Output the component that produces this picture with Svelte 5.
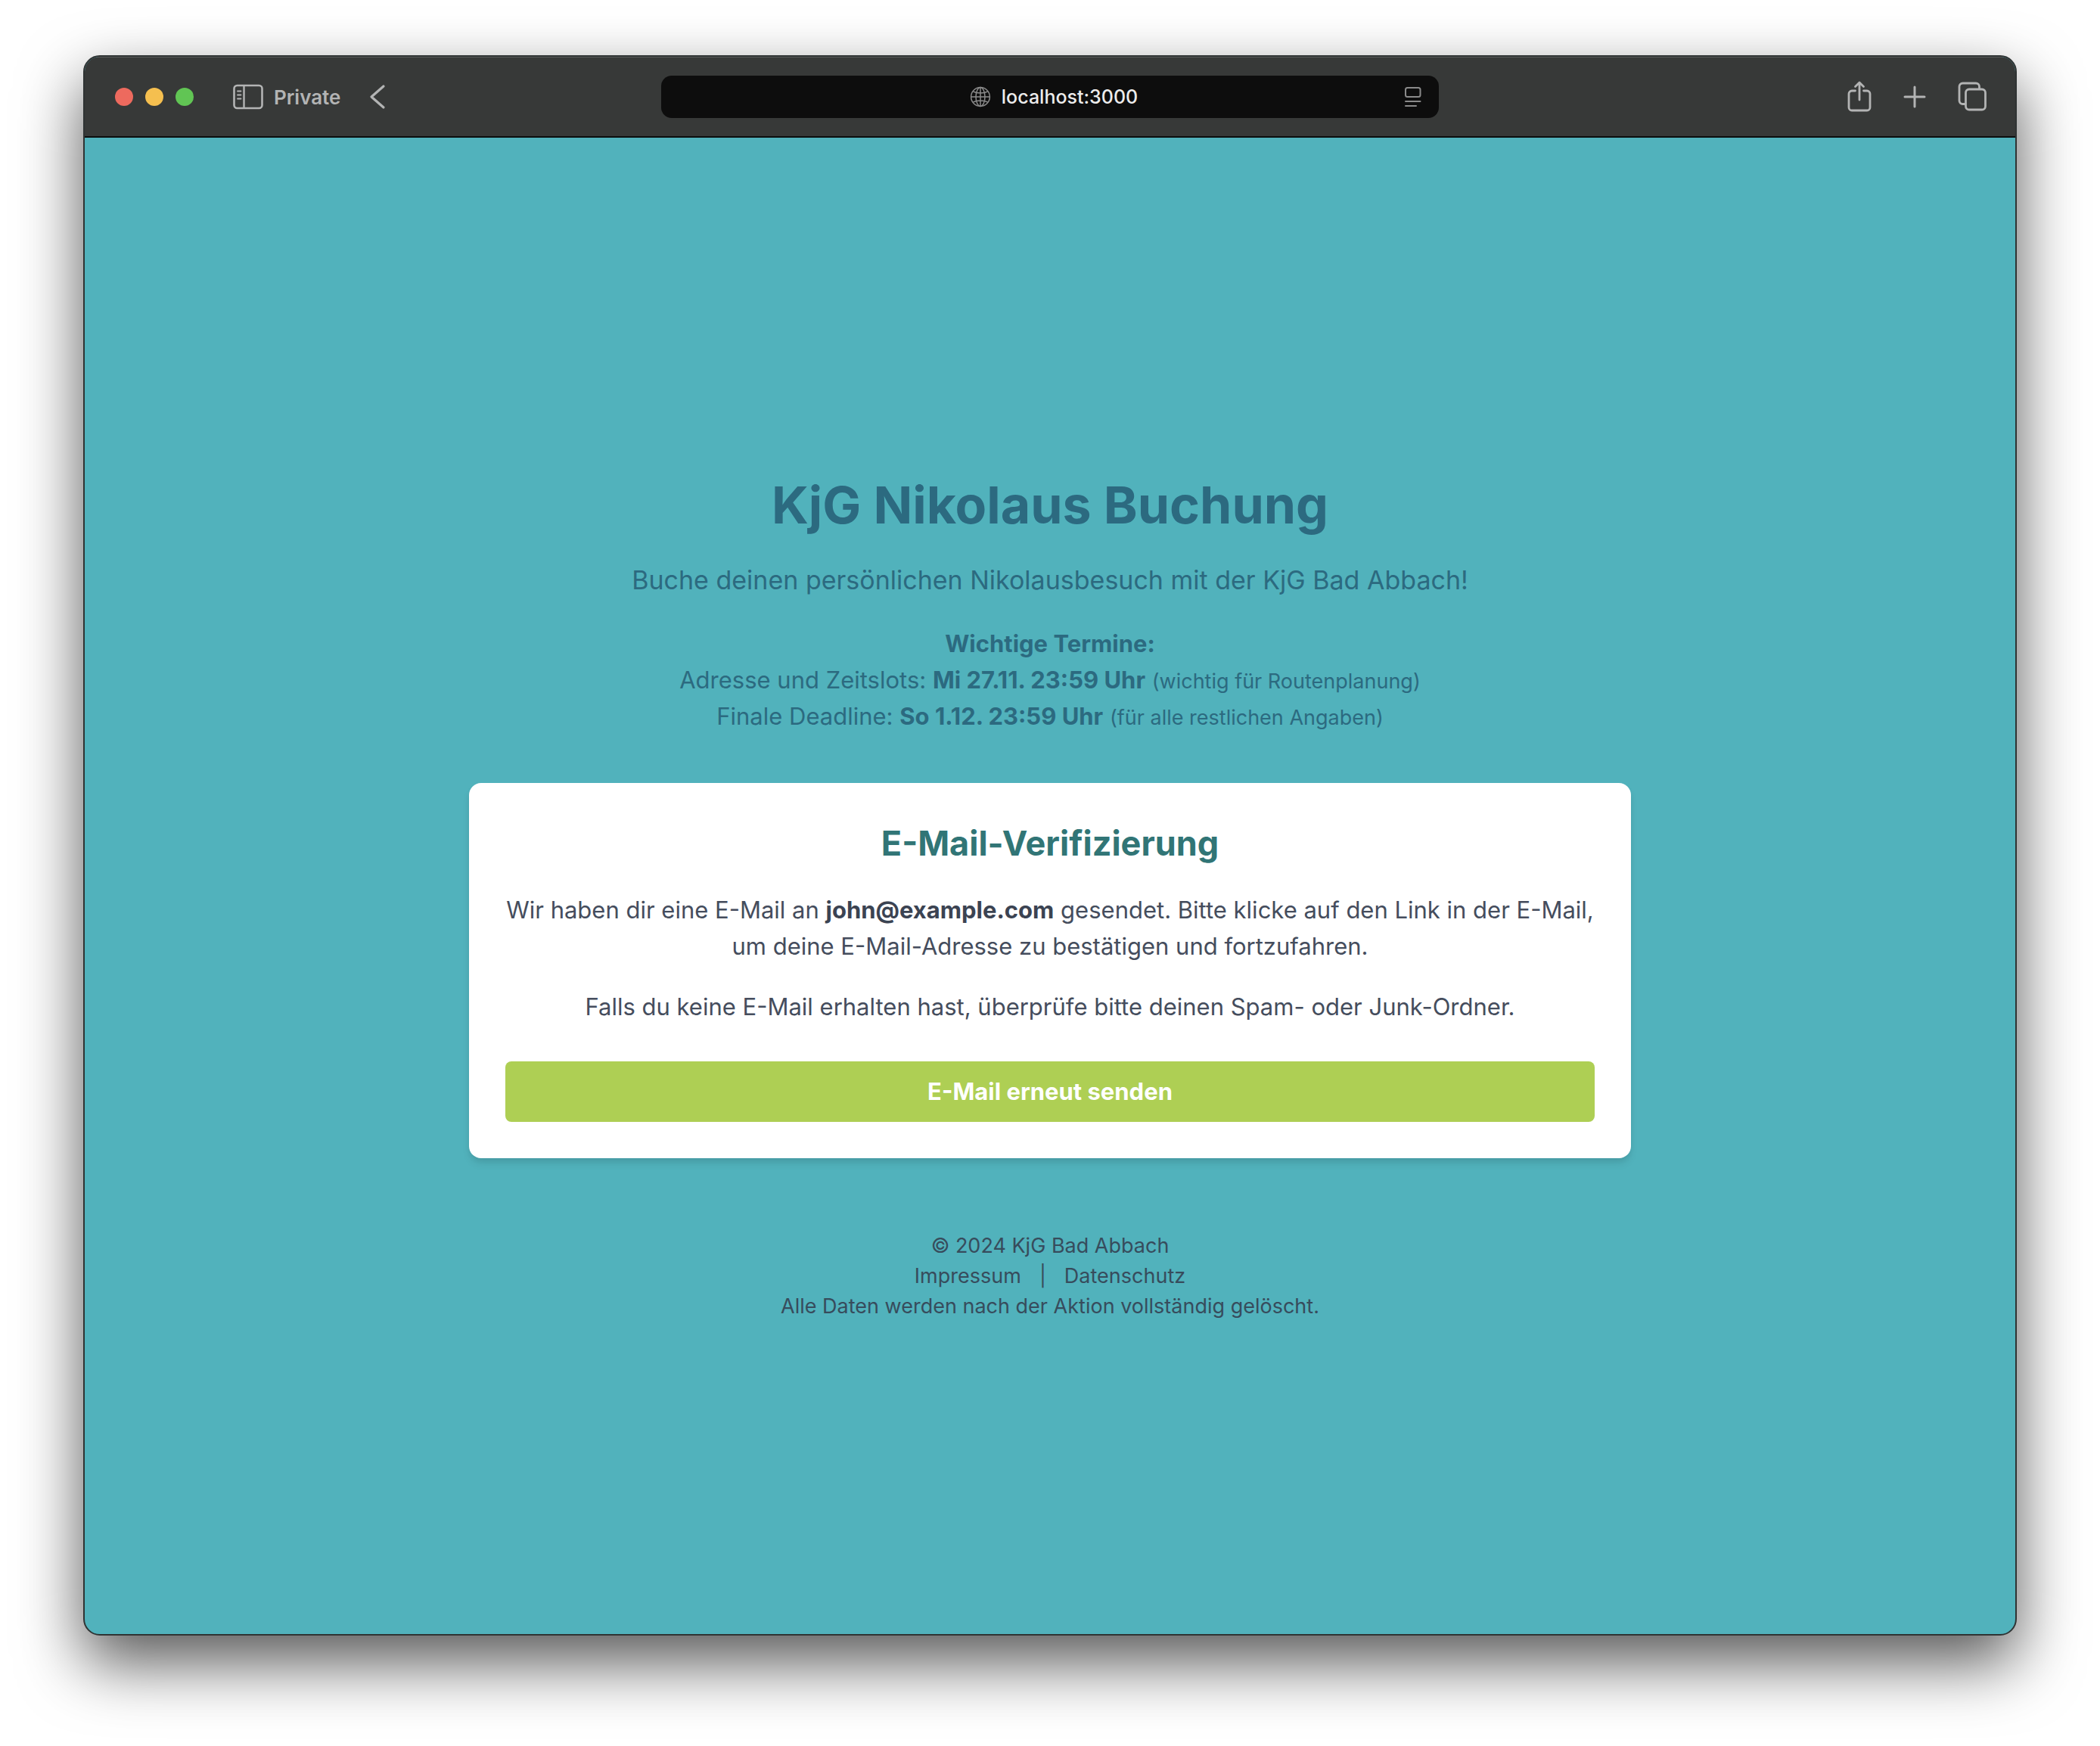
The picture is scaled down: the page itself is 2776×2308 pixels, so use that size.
<script lang="ts">
  const email = 'john@example.com';
  const deadlines = [
    { label: 'Adresse und Zeitslots:', date: 'Mi 27.11. 23:59 Uhr', note: '(wichtig für Routenplanung)' },
    { label: 'Finale Deadline:', date: 'So 1.12. 23:59 Uhr', note: '(für alle restlichen Angaben)' }
  ];
  let address = $state('localhost:3000');
</script>

<div class="desktop">
  <div class="window">
    <div class="toolbar">
      <div class="side">
        <div class="lights">
          <button class="light red" aria-label="Schließen"></button>
          <button class="light yellow" aria-label="Minimieren"></button>
          <button class="light green" aria-label="Vollbild"></button>
        </div>
        <button class="tool private">
          <svg width="40" height="34" viewBox="0 0 40 34" fill="none" stroke="currentColor">
            <rect x="1.5" y="2" width="37" height="30" rx="4" stroke-width="2.6" />
            <path d="M14.5 2v30" stroke-width="2.4" />
            <path d="M6 9.5h4.500M6 14.500h4.500M6 19.500h4.500" stroke-width="1.8" stroke-linecap="round" />
          </svg>
          <span>Private</span>
        </button>
        <button class="tool" aria-label="Zurück">
          <svg width="22" height="34" viewBox="0 0 22 34" fill="none" stroke="currentColor" stroke-width="3.2" stroke-linecap="round" stroke-linejoin="round">
            <path d="M19 3L3 17L19 31" />
          </svg>
        </button>
      </div>

      <div class="address">
        <span class="slot"></span>
        <label class="url">
          <svg width="28" height="28" viewBox="0 0 28 28" fill="none" stroke="currentColor" stroke-width="1.5" aria-hidden="true">
            <circle cx="14" cy="14" r="12.400" />
            <ellipse cx="14" cy="14" rx="6" ry="12.400" />
            <path d="M14 1.600v24.800M1.600 14h24.800M4.200 6.800c5 2.900 14.600 2.900 19.600 0M4.200 21.200c5-2.900 14.600-2.900 19.600 0" />
          </svg>
          <input type="text" aria-label="Adresse" bind:value={address} />
        </label>
        <button class="slot reader" aria-label="Reader">
          <svg width="24" height="28" viewBox="0 0 24 28" fill="none" stroke="currentColor" stroke-width="2" stroke-linecap="round">
            <rect x="2" y="2" width="19.500" height="12" rx="2.500" />
            <path d="M2 20h19.500M2 26h14" />
          </svg>
        </button>
      </div>

      <div class="side right">
        <button class="tool" aria-label="Teilen">
          <svg width="32" height="42" viewBox="0 0 32 42" fill="none" stroke="currentColor" stroke-width="2.800" stroke-linecap="round" stroke-linejoin="round">
            <path d="M10.500 13H6a4 4 0 0 0-4 4v18a4 4 0 0 0 4 4h20a4 4 0 0 0 4-4V17a4 4 0 0 0-4-4h-4.500" />
            <path d="M16 25V2.500M10.500 7.500L16 2L21.500 7.500" />
          </svg>
        </button>
        <button class="tool" aria-label="Neuer Tab">
          <svg width="30" height="30" viewBox="0 0 30 30" fill="none" stroke="currentColor" stroke-width="3" stroke-linecap="round">
            <path d="M15 2v26M2 15h26" />
          </svg>
        </button>
        <button class="tool" aria-label="Tabübersicht">
          <svg width="38" height="40" viewBox="0 0 38 40" fill="none" stroke="currentColor" stroke-width="2.800" stroke-linecap="round" stroke-linejoin="round">
            <rect x="10.500" y="10" width="26" height="27" rx="4.500" />
            <path d="M10 29.500H6.500a4.500 4.500 0 0 1-4.500-4.500V6.500A4.500 4.500 0 0 1 6.500 2H24a4.500 4.500 0 0 1 4.500 4.500V9.500" />
          </svg>
        </button>
      </div>
    </div>

    <div class="page">
      <header>
        <h1>KjG Nikolaus Buchung</h1>
        <p class="lead">Buche deinen persönlichen Nikolausbesuch mit der KjG Bad Abbach!</p>
        <div class="dates">
          <p><strong>Wichtige Termine:</strong></p>
          {#each deadlines as d}
            <p>{d.label} <strong>{d.date}</strong> <small>{d.note}</small></p>
          {/each}
        </div>
      </header>

      <main class="card">
        <h2>E-Mail-Verifizierung</h2>
        <p>
          Wir haben dir eine E-Mail an <strong>{email}</strong> gesendet. Bitte klicke auf den Link in der E-Mail,
          um deine E-Mail-Adresse zu bestätigen und fortzufahren.
        </p>
        <p>Falls du keine E-Mail erhalten hast, überprüfe bitte deinen Spam- oder Junk-Ordner.</p>
        <button class="resend">E-Mail erneut senden</button>
      </main>

      <footer>
        <p>© 2024 KjG Bad Abbach</p>
        <nav>
          <a href="#impressum">Impressum</a>
          <span>|</span>
          <a href="#datenschutz">Datenschutz</a>
        </nav>
        <p>Alle Daten werden nach der Aktion vollständig gelöscht.</p>
      </footer>
    </div>
  </div>
</div>

<style>
  :global(body) {
    background: #fff;
    font-family: Inter, 'Liberation Sans', sans-serif;
  }

  :global(*) {
    box-sizing: border-box;
  }

  h1,
  h2,
  p {
    margin: 0;
  }

  button {
    border: 0;
    padding: 0;
    background: none;
    color: inherit;
    font: inherit;
    cursor: pointer;
  }

  svg {
    display: block;
    flex: none;
  }

  .desktop {
    display: flex;
    min-height: 100vh;
    padding: 73px 110px 146px;
  }

  .window {
    display: flex;
    flex: 1;
    flex-direction: column;
    border: 2px solid #2f3333;
    border-radius: 22px;
    overflow: hidden;
    background: #51b2bc;
    box-shadow: 0 36px 84px rgba(0, 0, 0, 0.66);
  }

  .toolbar {
    display: flex;
    align-items: center;
    gap: 24px;
    height: 107px;
    padding: 0 38px;
    border-top: 1px solid #5a5c5b;
    border-bottom: 2px solid #0c0e0e;
    background: #373938;
    color: #b3b4b4;
  }

  .side {
    display: flex;
    flex: 1;
    align-items: center;
  }

  .right {
    justify-content: flex-end;
    gap: 42px;
  }

  .lights {
    display: flex;
    gap: 16px;
    margin: 0 52px 0 2px;
  }

  .light {
    width: 24px;
    height: 24px;
    border-radius: 50%;
  }

  .red {
    background: #ed6a5e;
  }

  .yellow {
    background: #f5bf4f;
  }

  .green {
    background: #61c554;
  }

  .private {
    display: flex;
    align-items: center;
    gap: 14px;
    margin-right: 38px;
    font-size: 26px;
    font-weight: 600;
  }

  .address {
    display: flex;
    flex: 0 1 1028px;
    align-items: center;
    justify-content: space-between;
    height: 56px;
    padding: 0 22px 0 32px;
    border-radius: 14px;
    background: #0d0d0d;
    color: #8a8a8a;
  }

  .slot {
    display: flex;
    flex: none;
    justify-content: flex-end;
    width: 24px;
  }

  .url {
    display: flex;
    align-items: center;
    gap: 14px;
  }

  .url input {
    field-sizing: content;
    border: 0;
    padding: 0;
    outline: 0;
    background: none;
    color: #ececec;
    font: 500 25px Inter, 'Liberation Sans', sans-serif;
  }

  .page {
    display: flex;
    flex: 1;
    flex-direction: column;
    align-items: center;
    justify-content: center;
    padding: 96px 48px 64px;
    text-align: center;
    font-size: 31px;
    line-height: 48px;
  }

  header {
    margin-bottom: 64px;
    color: #2c6a80;
  }

  h1 {
    margin-bottom: 32px;
    font-size: 68px;
    font-weight: 700;
    line-height: 80px;
  }

  .lead {
    margin-bottom: 32px;
    font-size: 34px;
    line-height: 56px;
  }

  small {
    font-size: 27px;
    line-height: 1;
  }

  .card {
    width: 100%;
    max-width: 1536px;
    padding: 48px;
    border-radius: 16px;
    background: #fff;
    box-shadow: 0 8px 12px -2px rgba(0, 0, 0, 0.1), 0 4px 8px -2px rgba(0, 0, 0, 0.06);
    color: #454d5d;
  }

  .card p {
    margin-bottom: 32px;
  }

  .card strong {
    color: #3b4352;
  }

  h2 {
    margin-bottom: 32px;
    color: #317576;
    font-size: 45px;
    font-weight: 700;
    line-height: 64px;
  }

  .resend {
    width: 100%;
    height: 80px;
    margin-top: 16px;
    border-radius: 8px;
    background: #aecf54;
    color: #fff;
    font-weight: 700;
  }

  footer {
    margin-top: 96px;
    color: #374c5c;
    font-size: 27px;
    line-height: 40px;
  }

  nav {
    display: flex;
    justify-content: center;
    gap: 24px;
  }

  a {
    color: inherit;
    text-decoration: none;
  }
</style>
